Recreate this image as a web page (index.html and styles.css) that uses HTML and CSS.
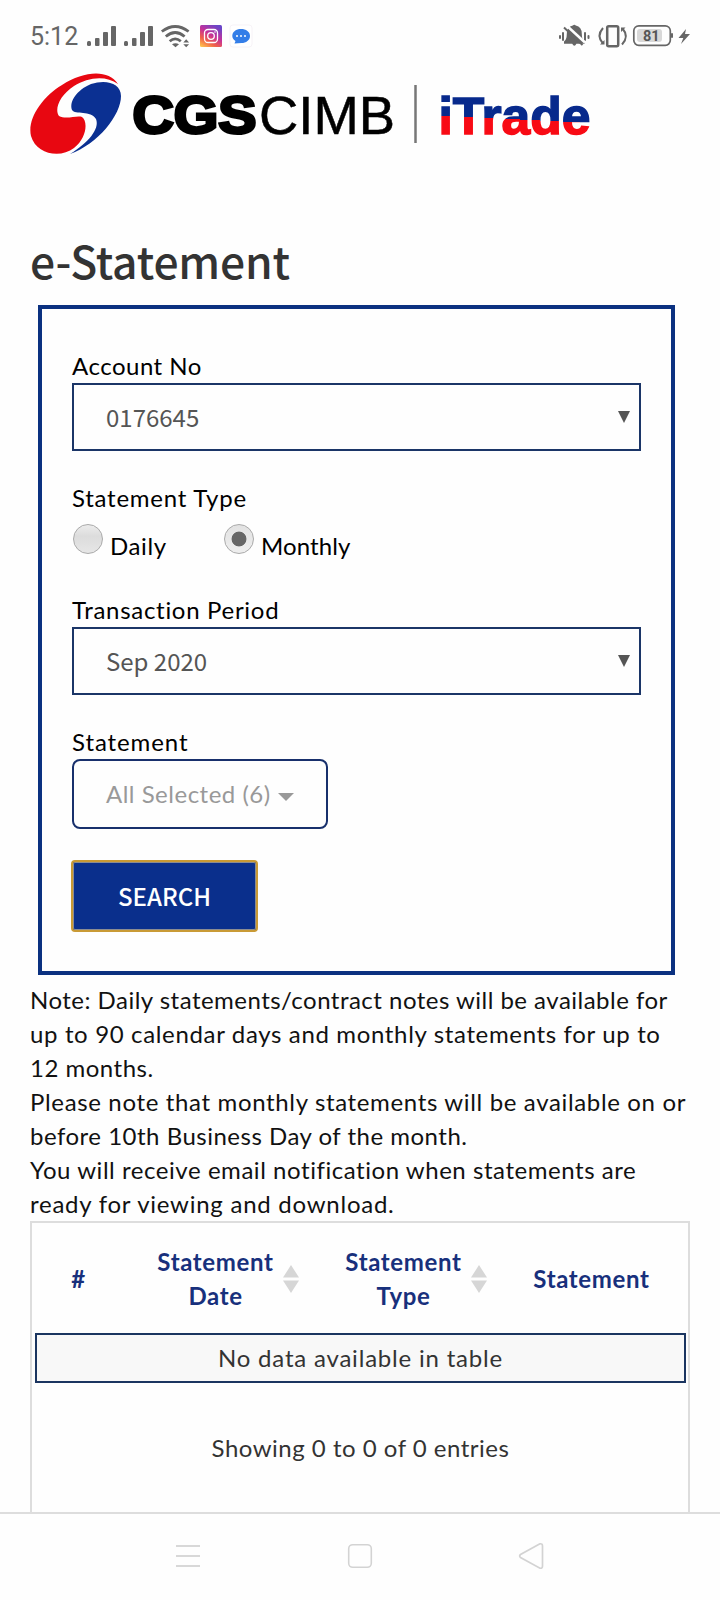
FILE: index.html
```html
<!DOCTYPE html>
<html lang="en">
<head>
<meta charset="utf-8">
<title>e-Statement</title>
<link rel="stylesheet" href="styles.css">
</head>
<body>
<div class="screen">
  <header class="status">
    <span class="clock">5:12</span>
    <svg class="status-left" width="168" height="26" viewBox="86 23 168 26">
      <g fill="#666">
        <rect x="87" y="41" width="4" height="5" rx="1.5"/><rect x="95" y="38" width="4.500" height="8" rx="1"/><rect x="103" y="32" width="5" height="14" rx="1"/><rect x="111" y="26" width="5" height="20" rx="1"/>
        <rect x="124" y="41" width="4" height="5" rx="1.5"/><rect x="132" y="38" width="4.500" height="8" rx="1"/><rect x="140" y="32" width="5" height="14" rx="1"/><rect x="148" y="26" width="5" height="20" rx="1"/>
        <path d="M172 44.2q3.5-2 7 0l-3.5 3z"/>
        <path d="M183.3 42.5l2.9-3.2 2.9 3.2zM183.3 44.3h5.8l-2.9 3z"/>
      </g>
      <g fill="none" stroke="#666" stroke-width="2.8">
        <path d="M161.800 31.500Q175.200 21.500 188.600 31.500"/><path d="M165.800 36.500Q175.200 28.500 184.600 36.500"/><path d="M169.700 41.200Q175.200 36.500 180.800 41.200"/>
      </g>
      <defs><linearGradient id="ig" x1="0.1" y1="1" x2="0.7" y2="0"><stop offset="0" stop-color="#ffc24d"/><stop offset=".3" stop-color="#f0604a"/><stop offset=".6" stop-color="#c5309a"/><stop offset="1" stop-color="#6a45c8"/></linearGradient></defs>
      <rect x="200" y="25" width="22" height="22" rx="1.500" fill="url(#ig)"/>
      <rect x="204.500" y="29.500" width="13" height="13" rx="3.500" fill="none" stroke="#fff" stroke-width="1.300"/>
      <circle cx="211" cy="36" r="3.300" fill="none" stroke="#fff" stroke-width="1.300"/><circle cx="215" cy="32" r=".8" fill="#fff"/>
      <rect x="230" y="25" width="22" height="22" rx="3" fill="#fff" stroke="#f3eef3" stroke-width=".7"/>
      <path d="M241 29c5 0 9 2.700 9 7s-4 7-8.500 7l-7 .5 1-2.500c-2-1.200-3.200-3-3.200-5 0-4.300 3.700-7 8.700-7z" fill="#347ee8"/>
      <g fill="#fff"><circle cx="237" cy="36" r="1"/><circle cx="241" cy="36" r="1"/><circle cx="245" cy="36" r="1"/></g>
    </svg>
    <svg class="status-right" width="134" height="26" viewBox="558 23 134 26">
      <g fill="#666">
        <path d="M564 41.500q2.800-2 2.800-7.500 0-7.500 6-8.500 1.500-1.500 3 0 6 1 6 8.500 0 5.500 2.800 7.500v2.200h-8.200q-2 4-4.200 0H564z"/>
        <rect x="559" y="35" width="2" height="4" rx="1"/><rect x="562" y="32" width="2" height="9" rx="1"/><rect x="584" y="32" width="2" height="9" rx="1"/><rect x="587.500" y="35" width="2" height="4" rx="1"/>
        <path d="M686 29l-7.500 9h4.800l-2.300 6 9-10h-5z"/>
        <rect x="671" y="33" width="2" height="5" rx="1"/>
      </g>
      <path d="M566 25l19 17.500" stroke="#fff" stroke-width="2.500"/><path d="M564 27.500l18.500 17.500" stroke="#666" stroke-width="2"/>
      <g fill="none" stroke="#666">
        <rect x="607.200" y="26.200" width="11" height="20" rx="1.500" stroke-width="2.500"/>
        <path d="M603 28q-7 8 0 15.500M622.500 28.500q7 8-.5 16" stroke-width="2"/>
        <rect x="633.800" y="25.800" width="36.500" height="19.500" rx="5" stroke-width="1.700"/>
      </g>
      <path d="M600 44.500h4.500v-4.500zM621 27.500h4.500l-4.500 4.500z" fill="#666"/>
      <rect x="637" y="29" width="25" height="13" rx="3" fill="#d8d8d8"/>
      <text class="battery" x="643" y="40.800">81</text>
    </svg>
  </header>

  <svg class="logo" width="600" height="90" viewBox="0 70 600 90">
    <defs><linearGradient id="split" gradientUnits="userSpaceOnUse" x1="515" y1="98" x2="513" y2="138"><stop offset=".53" stop-color="#07298c"/><stop offset=".53" stop-color="#f80a14"/></linearGradient></defs>
    <path d="M118 84C108 69 84 71 62 85C42 97 27 119 31 136C36 154 60 159 74 148C87 138 88 121 82 117C77 115 66 120 59 116C54 109 60 95 74 86C88 77 106 75 118 84Z" fill="#e80711"/>
    <path d="M70 154C98 144 121 115 121 96C121 83 106 79 91 84C77 90 69 101 72 110C75 115 91 110 96 119C100 129 88 143 70 154Z" fill="#0b3092"/>
    <text class="logo-cgs" x="132.500" y="133" textLength="124" lengthAdjust="spacingAndGlyphs">CGS</text>
    <text class="logo-cimb" x="259" y="133.500" textLength="136" lengthAdjust="spacingAndGlyphs">CIMB</text>
    <path d="M415.500 85v58" stroke="#777" stroke-width="2.500"/>
    <text class="logo-itrade" x="438.500" y="133.500" textLength="152" lengthAdjust="spacingAndGlyphs" fill="url(#split)" stroke="url(#split)">iTrade</text>
  </svg>

  <h1 class="title">e-Statement</h1>

  <form class="panel">
    <div class="label l-account">Account No</div>
    <div class="select"><span class="v-account">0176645</span><svg width="12" height="12" viewBox="0 0 12 12"><path d="M0 0h12L6 12z" fill="#555"/></svg></div>
    <div class="label l-type">Statement Type</div>
    <div class="radios">
      <span class="radio"></span><span class="choice daily">Daily</span>
      <span class="radio on"></span><span class="choice monthly">Monthly</span>
    </div>
    <div class="label l-period">Transaction Period</div>
    <div class="select"><span class="v-period">Sep 2020</span><svg width="12" height="12" viewBox="0 0 12 12"><path d="M0 0h12L6 12z" fill="#555"/></svg></div>
    <div class="label l-statement">Statement</div>
    <div class="multi"><span class="v-multi">All Selected (6)</span><svg width="16" height="8" viewBox="0 0 16 8"><path d="M0 0h16L8 8z" fill="#999"/></svg></div>
    <div class="search"><span>SEARCH</span></div>
  </form>

  <div class="notes">
    <div class="n1">Note: Daily statements/contract notes will be available for</div>
    <div class="n2">up to 90 calendar days and monthly statements for up to</div>
    <div class="n3">12 months.</div>
    <div class="n4">Please note that monthly statements will be available on or</div>
    <div class="n5">before 10th Business Day of the month.</div>
    <div class="n6">You will receive email notification when statements are</div>
    <div class="n7">ready for viewing and download.</div>
  </div>

  <section class="table">
    <div class="head">
      <div class="th th-no">#</div>
      <div class="th">Statement<br>Date</div>
      <svg class="sort" width="16" height="30" viewBox="0 0 16 30"><path d="M0 13.500L8 1l8 12.500zM0 16.500h16L8 29z" fill="#d6d6d6"/></svg>
      <div class="th th-type">Statement<br>Type</div>
      <svg class="sort" width="16" height="30" viewBox="0 0 16 30"><path d="M0 13.500L8 1l8 12.500zM0 16.500h16L8 29z" fill="#d6d6d6"/></svg>
      <div class="th th-last">Statement</div>
    </div>
    <div class="empty"><span>No data available in table</span></div>
    <div class="info"><span>Showing 0 to 0 of 0 entries</span></div>
  </section>

  <nav class="nav">
    <svg width="26" height="28" viewBox="0 0 26 28"><path d="M1 4h24M1 14h24M1 24h24" stroke="#d8d8d8" stroke-width="2"/></svg>
    <svg width="26" height="28" viewBox="0 0 26 28"><rect x="1.700" y="2.700" width="22.600" height="22.600" rx="4" fill="none" stroke="#d3d3d3" stroke-width="1.600"/></svg>
    <svg width="26" height="28" viewBox="0 0 26 28"><path d="M22 1.800L2.500 12.500Q.8 14 2.500 15.500L22 26.200Q24.500 26.500 24.500 24V4Q24.500 1.500 22 1.800z" fill="none" stroke="#d3d3d3" stroke-width="1.700"/></svg>
  </nav>
</div>
</body>
</html>
```
FILE: styles.css
```css
* { box-sizing: border-box; }
body { margin: 0; background: #fefefe; }
svg { display: block; flex: none; }
.screen {
  width: 720px; height: 1600px; overflow: hidden;
  display: flex; flex-direction: column;
  font: 24px/34px Lato, "Open Sans", sans-serif;
  color: #111; white-space: nowrap; letter-spacing: .5px;
}
.status { height: 70px; padding: 23px 28px 0 30px; display: flex; align-items: flex-start; }
.clock { width: 56px; font: 25px/28px Roboto, sans-serif; color: #666; letter-spacing: 0; }
.status-right { margin-left: auto; }
.battery { font: bold 14.5px Roboto, sans-serif; fill: #555; letter-spacing: 0; }
.logo { height: 90px; letter-spacing: 0; }
.logo-cgs { font: bold 52px "Liberation Sans", sans-serif; stroke: #000; stroke-width: 3px; }
.logo-cimb { font: 54px "Liberation Sans", sans-serif; stroke: #000; stroke-width: .5px; }
.logo-itrade { font: bold 52.5px "Liberation Sans", sans-serif; stroke-width: 1.5px; }
.title {
  margin: 65px 0 0 30px; height: 80px;
  font: 500 44.400px/70px "Noto Sans CJK SC", sans-serif; color: #333; letter-spacing: -.15px;
}
.panel {
  margin: 0 45px 0 38px; height: 670px; flex: none;
  border: 4px solid #0b3180; padding: 40px 30px 0;
}
.label { height: 34px; color: #000; }
.l-type { letter-spacing: .75px; }
.l-period { letter-spacing: .7px; }
.l-statement { letter-spacing: .9px; }
.select {
  height: 68px; margin-bottom: 30px; padding: 0 9px 0 32px;
  border: 2px solid #1b3567; display: flex; align-items: center; justify-content: space-between;
  font: 24px/36px "Noto Sans CJK SC", sans-serif; color: #555; letter-spacing: 0;
}
.select svg { margin-bottom: 1px; }
.radios { height: 48px; margin-bottom: 30px; display: flex; align-items: flex-start; color: #000; }
.radio {
  width: 30px; height: 30px; margin: 9px 7px 0 1px; border-radius: 50%;
  border: 1px solid #aaa; background: linear-gradient(#ececec, #dcdcdc 40%, #e6e6e6);
}
.radio.on { background: radial-gradient(circle, #666 7px, transparent 7.800px), linear-gradient(#e2e2e2, #eee); }
.choice { margin-top: 14px; }
.daily { width: 113px; letter-spacing: .6px; }
.monthly { letter-spacing: .1px; }
.multi {
  width: 256px; height: 70px; padding-left: 32px; margin-bottom: 31px;
  border: 2px solid #18306c; border-radius: 8px;
  display: flex; align-items: center; gap: 7px; color: #999;
}
.multi svg { margin-top: 5px; }
.search {
  width: 187px; height: 72px; margin-left: -1px; padding: 0;
  border: 2px solid #c99a35; border-radius: 4px; background: #0a2f8c;
  box-shadow: inset 0 0 0 1px #8b8c92;
  display: flex; align-items: center; justify-content: center;
  font: 500 24px/36px "Noto Sans CJK SC", sans-serif; color: #fff; letter-spacing: 0;
}
.notes { margin: 8px 0 0 30px; height: 238px; flex: none; }
.n1 { letter-spacing: .48px; }
.n2, .n4 { letter-spacing: .65px; }
.n6 { letter-spacing: .55px; }
.n7 { letter-spacing: .75px; }
.table {
  margin: 0 30px; height: 291px; flex: none;
  border: 2px solid #ddd; border-bottom: 0; padding: 0 2px 0 3px;
}
.head {
  height: 110px; padding-top: 2px;
  display: grid; grid-template-columns: 113px 135px 16px 172px 16px 1fr; align-items: center;
  text-align: center; font-weight: bold; color: #18307c; letter-spacing: .65px;
}
.th-no { padding-right: 26px; }
.th-type { padding-left: 37px; }
.th-last { padding-left: 10px; }
.empty {
  height: 50px; border: 2px solid #1b3560; background: #f8f8f8; color: #333; letter-spacing: .8px;
  display: flex; align-items: center; justify-content: center;
}
.info { padding-top: 48px; text-align: center; color: #333; }
.nav {
  height: 88px; border-top: 2px solid #ddd; padding: 28px 176px 0 175px;
  display: flex; justify-content: space-between;
}
```
